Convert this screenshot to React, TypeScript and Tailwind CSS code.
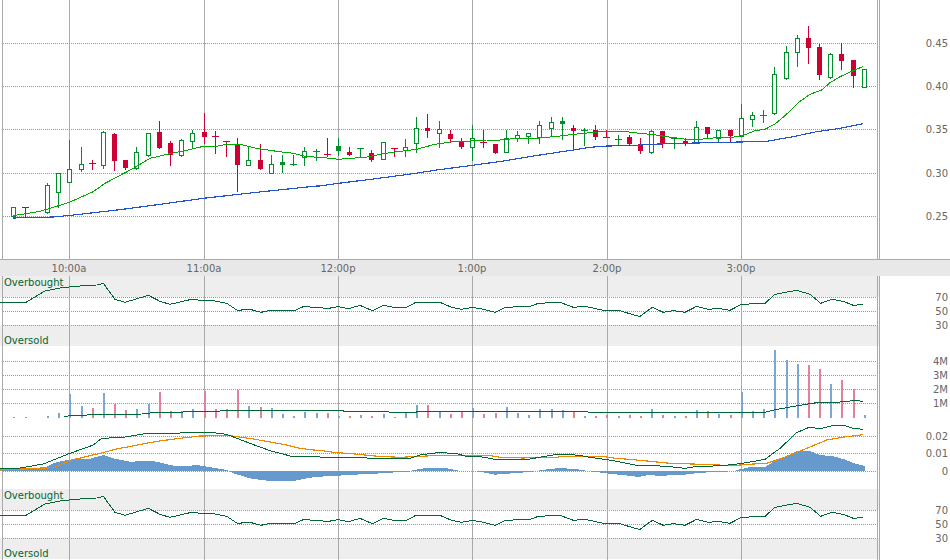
const VLINES = [2, 69, 204, 338, 472, 607, 741, 877, 879];
const TIMES: [number, string][] = [[69, '10:00a'], [204, '11:00a'], [338, '12:00p'], [472, '1:00p'], [607, '2:00p'], [741, '3:00p']];

// top, bottom, wick top, wick bottom, kind (h hollow green, g solid green, r solid red)
type Candle = [number, number, number, number, string] | null;
const CANDLES: Candle[] = [
  [207, 216, 207, 217, 'h'], [207, 207, 207, 216, 'r'], null, [185, 212, 183, 213, 'h'], [173, 192, 173, 207, 'h'],
  [169, 182, 140, 182, 'h'], [164, 169, 147, 171, 'h'], [163, 163, 160, 169, 'r'], [132, 165, 131, 168, 'h'], [134, 160, 133, 170, 'r'],
  [160, 167, 160, 169, 'r'], [152, 168, 147, 169, 'h'], [133, 155, 133, 156, 'h'], [132, 147, 121, 148, 'r'], [143, 154, 141, 165, 'r'],
  [140, 155, 139, 156, 'h'], [133, 141, 130, 148, 'h'], [132, 136, 113, 143, 'r'], [136, 136, 131, 153, 'r'], [141, 141, 141, 156, 'r'],
  [145, 164, 138, 191, 'r'], [160, 165, 147, 165, 'h'], [160, 168, 144, 169, 'r'], [164, 173, 155, 173, 'h'], [162, 164, 155, 172, 'g'],
  [164, 164, 155, 165, 'g'], [151, 157, 147, 165, 'h'], [151, 151, 149, 160, 'g'], [154, 154, 138, 156, 'r'], [146, 150, 138, 155, 'g'],
  [152, 154, 147, 155, 'r'], [148, 148, 148, 156, 'g'], [153, 159, 150, 161, 'r'], [142, 159, 142, 159, 'h'], [148, 148, 148, 156, 'r'],
  [147, 150, 139, 156, 'h'], [128, 143, 117, 152, 'h'], [128, 130, 114, 137, 'r'], [129, 133, 121, 147, 'h'], [134, 138, 130, 142, 'r'],
  [142, 146, 138, 148, 'r'], [138, 147, 125, 160, 'h'], [142, 142, 130, 147, 'r'], [144, 152, 144, 153, 'r'], [138, 152, 130, 152, 'h'],
  [135, 138, 131, 141, 'h'], [133, 136, 133, 143, 'h'], [125, 137, 121, 143, 'h'], [122, 128, 117, 135, 'h'], [121, 123, 117, 139, 'g'],
  [128, 130, 125, 150, 'r'], [130, 130, 128, 145, 'g'], [130, 136, 125, 139, 'r'], [137, 137, 130, 137, 'r'], [139, 139, 135, 144, 'g'],
  [137, 143, 135, 145, 'r'], [144, 150, 138, 153, 'r'], [131, 152, 130, 153, 'h'], [131, 142, 131, 147, 'r'], [138, 138, 138, 148, 'g'],
  [141, 143, 138, 145, 'r'], [127, 143, 121, 143, 'h'], [127, 133, 127, 138, 'r'], [130, 138, 130, 142, 'h'], [130, 135, 130, 142, 'r'],
  [118, 136, 104, 136, 'h'], [115, 119, 112, 126, 'h'], [115, 115, 110, 122, 'g'], [74, 113, 67, 114, 'h'], [52, 78, 46, 79, 'h'],
  [38, 52, 35, 66, 'h'], [38, 47, 26, 63, 'r'], [47, 74, 44, 79, 'r'], [54, 77, 53, 78, 'h'], [54, 60, 43, 69, 'r'],
  [60, 75, 60, 87, 'r'], [69, 87, 69, 87, 'h'],
];

// volume bars, top y per candle, p = pink; bottom sits at 418
const VOLUME: [number, number][] = [
  [417, 1], [417, 1], [0, 0], [416, 0], [413, 0], [394, 0], [406, 0], [408, 1], [393, 0], [404, 1], [410, 1], [409, 0], [404, 0], [392, 1], [411, 1], [411, 0],
  [409, 0], [391, 1], [409, 1], [409, 1], [390, 1], [406, 0], [407, 1], [408, 0], [414, 0], [416, 0], [412, 0], [413, 0], [413, 1], [416, 0], [416, 1], [415, 0],
  [416, 1], [414, 0], [417, 1], [413, 0], [405, 0], [405, 1], [412, 0], [414, 1], [412, 1], [408, 0], [414, 1], [413, 1], [407, 0], [413, 0], [415, 0], [409, 0],
  [409, 0], [410, 0], [412, 1], [416, 0], [416, 1], [415, 1], [416, 0], [415, 1], [416, 1], [409, 0], [415, 1], [416, 0], [416, 1], [410, 0], [411, 1], [414, 0],
  [415, 1], [392, 0], [411, 0], [409, 0], [350, 0], [360, 0], [364, 0], [365, 1], [369, 1], [384, 0], [380, 1], [389, 1], [415, 0],
];

const candleX = (i: number) => Math.round(13.4 + 11.19 * i);

// each list was read off a 3x crop of the chart, so map back to page pixels
const seg = (ox: number, oy: number, list: number[]) => {
  const out: string[] = [];
  for (let i = 0; i < list.length; i += 2) out.push(`${ox + list[i] / 3},${oy + list[i + 1] / 3}`);
  return out.join(' ');
};

const MA_GREEN = [
  seg(0, 0, [40, 646, 60, 644, 120, 634, 150, 625, 208, 607, 280, 575, 315, 550, 400, 505, 450, 475, 510, 461, 560, 451, 610, 439, 650, 439, 680, 433, 725, 434, 770, 445, 830, 454, 880, 460, 913, 468, 950, 472]),
  seg(320, 60, [0, 292, 40, 296, 55, 298, 105, 294, 135, 292, 190, 281, 225, 276, 290, 268, 340, 254, 390, 246, 450, 243, 500, 240, 540, 240, 590, 235, 660, 234, 720, 228, 760, 223, 810, 218, 860, 214, 910, 214, 950, 219]),
  seg(640, 0, [0, 400, 40, 404, 95, 412, 140, 418, 180, 418, 220, 414, 270, 413, 310, 406, 345, 392, 375, 388, 405, 372, 435, 347, 475, 308, 510, 283, 545, 270, 570, 248, 600, 230, 640, 212, 670, 199]),
].join(' ');

const MA_BLUE = [
  seg(0, 0, [40, 654, 160, 651, 230, 644, 360, 629, 480, 613, 610, 595, 760, 578, 950, 558]),
  seg(320, 60, [0, 378, 55, 370, 160, 357, 280, 341, 350, 330, 450, 317, 550, 303, 640, 288, 760, 270, 810, 262, 860, 258, 950, 257]),
  seg(640, 0, [0, 435, 30, 433, 120, 430, 220, 428, 380, 424, 460, 410, 530, 395, 600, 385, 670, 371]),
].join(' ');

// rsi line relative to the panel top (276 on the page)
const RSI = [
  seg(0, -16, [0, 127, 78, 127, 135, 93, 180, 84, 225, 79, 290, 75, 310, 70, 345, 118, 375, 127, 445, 106, 480, 124, 510, 133, 570, 119, 640, 122, 680, 130, 712, 151, 750, 148, 783, 157, 810, 151, 885, 151, 910, 140, 950, 142]),
  seg(320, -16, [0, 142, 20, 146, 55, 140, 85, 146, 120, 136, 157, 152, 190, 136, 220, 142, 260, 142, 287, 127, 360, 127, 395, 142, 425, 148, 457, 142, 490, 148, 525, 157, 555, 142, 630, 139, 655, 130, 720, 127, 760, 142, 795, 139, 850, 151, 895, 151, 950, 167]),
  seg(640, -16, [0, 169, 37, 142, 70, 157, 100, 152, 135, 157, 170, 139, 205, 148, 235, 145, 270, 151, 304, 133, 375, 130, 405, 103, 435, 97, 470, 91, 510, 103, 542, 130, 575, 118, 610, 124, 640, 136, 670, 133]),
].join(' ');

// volume average and macd, relative to the panel top (346 on the page)
const VOL_AVG = [
  seg(0, -86, [192, 469, 230, 466, 295, 464, 425, 462, 460, 458, 595, 455, 695, 452, 950, 452]),
  seg(320, -86, [0, 452, 205, 455, 210, 458, 290, 457, 290, 455, 800, 455, 815, 458, 950, 458]),
  seg(640, -86, [0, 458, 375, 457, 405, 449, 440, 443, 480, 436, 530, 428, 590, 427, 650, 421, 670, 425]),
].join(' ');

const MACD_AREA = [
  seg(0, -86, [0, 625, 100, 625, 140, 620, 170, 606, 205, 600, 270, 596, 310, 585, 345, 596, 370, 601, 395, 606, 425, 602, 460, 603, 490, 610, 525, 618, 560, 618, 590, 615, 620, 620, 650, 625, 680, 630, 700, 640, 750, 655, 800, 662, 885, 662, 920, 655, 950, 650]),
  seg(320, -86, [0, 650, 40, 648, 105, 644, 170, 641, 205, 638, 265, 636, 280, 630, 320, 624, 375, 624, 415, 632, 480, 635, 525, 644, 575, 640, 630, 636, 680, 628, 720, 624, 775, 628, 810, 634, 860, 640, 915, 646, 950, 650]),
  seg(640, -86, [0, 650, 30, 644, 55, 648, 90, 646, 135, 644, 165, 640, 220, 636, 280, 634, 300, 628, 330, 621, 375, 621, 400, 606, 435, 590, 470, 574, 510, 573, 540, 585, 580, 589, 610, 597, 640, 609, 675, 618, 675, 634]),
].join(' ');

const MACD_LINE = [
  seg(0, -86, [0, 626, 60, 624, 130, 612, 210, 580, 280, 555, 305, 535, 370, 532, 440, 520, 510, 522, 560, 517, 630, 517, 680, 523, 750, 550, 810, 572, 875, 589, 950, 589]),
  seg(320, -86, [0, 591, 70, 593, 130, 593, 175, 597, 270, 595, 300, 585, 360, 577, 415, 582, 440, 590, 480, 590, 520, 597, 630, 597, 680, 588, 720, 582, 780, 586, 810, 592, 880, 602, 950, 616]),
  seg(640, -86, [0, 618, 30, 616, 90, 620, 135, 625, 165, 620, 220, 618, 280, 614, 330, 606, 375, 598, 420, 565, 470, 518, 505, 503, 545, 505, 580, 496, 610, 496, 640, 505, 670, 508]),
].join(' ');

const MACD_SIGNAL = [
  seg(0, -86, [0, 630, 110, 625, 160, 623, 215, 600, 300, 580, 350, 567, 470, 544, 540, 535, 600, 528, 690, 527, 760, 537, 850, 553, 900, 565, 950, 571]),
  seg(320, -86, [0, 571, 40, 577, 105, 582, 175, 589, 240, 592, 280, 590, 340, 587, 510, 587, 540, 592, 610, 594, 640, 593, 710, 592, 720, 590, 845, 589, 880, 594, 950, 600]),
  seg(640, -86, [0, 601, 50, 606, 90, 610, 190, 613, 280, 617, 320, 613, 380, 610, 430, 593, 500, 565, 560, 540, 620, 530, 670, 524]),
].join(' ');

function Grid({ ys, height }: { ys: number[]; height: number }) {
  return (
    <g>
      {ys.map((y) => (
        <line key={y} x1={3} x2={877} y1={y + 0.5} y2={y + 0.5} stroke="#999999" strokeDasharray="1 1" />
      ))}
      {VLINES.map((x) => (
        <line key={x} x1={x + 0.5} x2={x + 0.5} y1={0} y2={height} stroke="#aaaaaa" />
      ))}
    </g>
  );
}

function Axis({ height, labels }: { height: number; labels: [number, string][] }) {
  return (
    <svg width={70} height={height} className="shrink-0">
      {labels.map(([y, text]) => (
        <text key={text} x={68} y={y + 4} textAnchor="end" fill="#666666" fontSize={10}>
          {text}
        </text>
      ))}
    </svg>
  );
}

function Candles() {
  return (
    <g>
      {CANDLES.map((c, i) => {
        if (!c) return null;
        const [top, bottom, wt, wb, kind] = c;
        const x = candleX(i);
        const color = kind === 'r' ? '#cc0033' : '#008f2b';
        return (
          <g key={i}>
            <line x1={x + 0.5} x2={x + 0.5} y1={wt} y2={wb + 1} stroke={color} />
            {top === bottom ? (
              <line x1={x - 3} x2={x + 4} y1={top + 0.5} y2={top + 0.5} stroke={color} />
            ) : kind === 'h' ? (
              <rect x={x - 1.5} y={top + 0.5} width={4} height={bottom - top} fill="#ffffff" stroke={color} />
            ) : (
              <rect x={x - 2} y={top} width={5} height={bottom - top + 1} fill={color} />
            )}
          </g>
        );
      })}
    </g>
  );
}

function RsiPanel({ height }: { height: number }) {
  return (
    <div className="flex" style={{ height }}>
      <svg width={880} height={height} shapeRendering="crispEdges" className="shrink-0">
        <rect x={0} y={0} width={880} height={21} fill="#eeeeee" />
        <rect x={0} y={49} width={880} height={21} fill="#eeeeee" />
        <Grid ys={[21, 35, 49]} height={height} />
        <polyline points={RSI} fill="none" stroke="#006633" />
        <text x={4} y={10} fill="#006633" fontSize={10}>Overbought</text>
        <text x={4} y={68} fill="#006633" fontSize={10}>Oversold</text>
      </svg>
      <Axis height={height} labels={[[21, '70'], [35, '50'], [49, '30']]} />
    </div>
  );
}

export default function App() {
  return (
    <div className="flex flex-col w-[950px] h-[560px] overflow-hidden bg-white font-['DejaVu_Sans',sans-serif]">
      <div className="flex h-[259px]">
        <svg width={880} height={259} shapeRendering="crispEdges" className="shrink-0">
          <Grid ys={[43, 86, 129, 173, 216]} height={259} />
          <Candles />
          <polyline points={MA_BLUE} fill="none" stroke="#2255cc" strokeWidth={1.15} />
          <polyline points={MA_GREEN} fill="none" stroke="#00aa00" />
        </svg>
        <Axis height={259} labels={[[43, '0.45'], [86, '0.40'], [129, '0.35'], [173, '0.30'], [216, '0.25']]} />
      </div>

      <div className="h-[17px] border-t border-[#aaaaaa] bg-[#e8e8e8]">
        <svg width={950} height={16}>
          {TIMES.map(([x, text]) => (
            <text key={text} x={x} y={12} textAnchor="middle" fill="#666666" fontSize={10}>
              {text}
            </text>
          ))}
        </svg>
      </div>

      <RsiPanel height={70} />

      <div className="flex h-[143px]">
        <svg width={880} height={143} shapeRendering="crispEdges" className="shrink-0">
          <Grid ys={[15, 29, 43, 57, 90, 107, 125]} height={143} />
          {VOLUME.map(([top, pink], i) =>
            top ? (
              <rect key={i} x={candleX(i)} y={top - 346} width={2} height={418 - top} fill={pink ? '#e5809b' : '#7ba7d3'} />
            ) : null,
          )}
          <polyline points={VOL_AVG} fill="none" stroke="#006633" />
          <polygon points={`0,125 ${MACD_AREA}`} fill="#6699cc" />
          <polyline points={MACD_SIGNAL} fill="none" stroke="#ee8800" strokeWidth={1.15} />
          <polyline points={MACD_LINE} fill="none" stroke="#006633" />
        </svg>
        <Axis
          height={143}
          labels={[[15, '4M'], [29, '3M'], [43, '2M'], [57, '1M'], [90, '0.02'], [107, '0.01'], [125, '0']]}
        />
      </div>

      <RsiPanel height={71} />
    </div>
  );
}
